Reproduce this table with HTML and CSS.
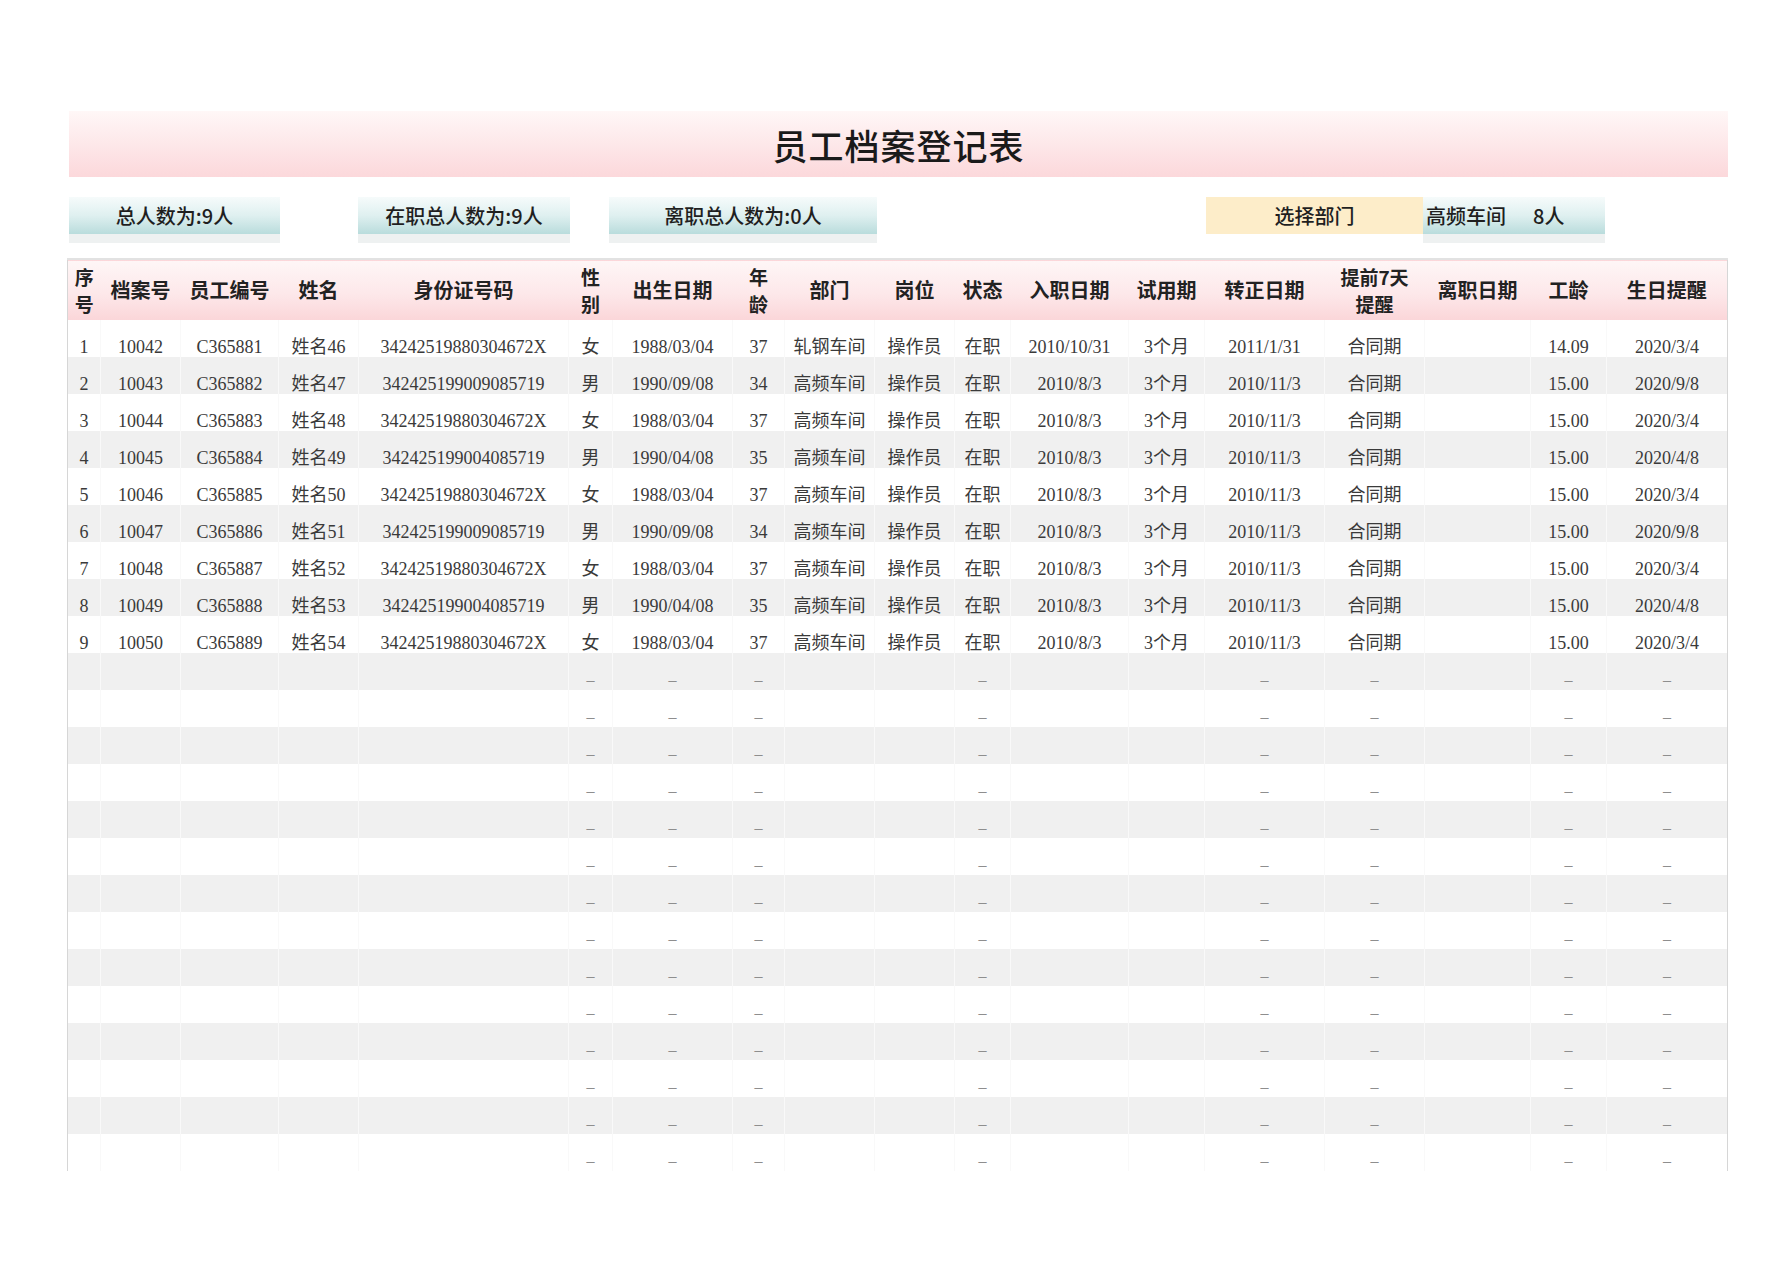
FILE: index.html
```html
<!DOCTYPE html>
<html lang="zh-CN">
<head>
<meta charset="utf-8">
<title>员工档案登记表</title>
<link rel="stylesheet" href="styles.css">
</head>
<body>
<div class="sheet">
  <div class="title-band"><h1 class="title">员工档案登记表</h1></div>

  <div class="summary">
    <div class="stat stat-1">总人数为:9人</div>
    <div class="stat stat-2">在职总人数为:9人</div>
    <div class="stat stat-3">离职总人数为:0人</div>
    <div class="pick">选择部门</div>
    <div class="stat stat-dept"><span>高频车间</span><span class="dept-count">8人</span></div>
  </div>

  <table class="grid">
    <colgroup>
      <col class="c-33"><col class="c-80"><col class="c-98"><col class="c-80"><col class="c-210">
      <col class="c-44"><col class="c-120"><col class="c-52"><col class="c-90"><col class="c-80">
      <col class="c-56"><col class="c-118"><col class="c-76"><col class="c-120"><col class="c-100">
      <col class="c-106"><col class="c-76"><col class="c-121">
    </colgroup>
    <thead>
      <tr>
        <th class="two">序<br>号</th><th>档案号</th><th>员工编号</th><th>姓名</th><th>身份证号码</th>
        <th class="two">性<br>别</th><th>出生日期</th><th class="two">年<br>龄</th><th>部门</th><th>岗位</th>
        <th>状态</th><th>入职日期</th><th>试用期</th><th>转正日期</th><th class="two">提前7天<br>提醒</th>
        <th>离职日期</th><th>工龄</th><th>生日提醒</th>
      </tr>
    </thead>
    <tbody>
      <tr><td>1</td><td>10042</td><td>C365881</td><td>姓名46</td><td>34242519880304672X</td><td>女</td><td>1988/03/04</td><td>37</td><td>轧钢车间</td><td>操作员</td><td>在职</td><td>2010/10/31</td><td>3个月</td><td>2011/1/31</td><td>合同期</td><td></td><td>14.09</td><td>2020/3/4</td></tr>
      <tr><td>2</td><td>10043</td><td>C365882</td><td>姓名47</td><td>342425199009085719</td><td>男</td><td>1990/09/08</td><td>34</td><td>高频车间</td><td>操作员</td><td>在职</td><td>2010/8/3</td><td>3个月</td><td>2010/11/3</td><td>合同期</td><td></td><td>15.00</td><td>2020/9/8</td></tr>
      <tr><td>3</td><td>10044</td><td>C365883</td><td>姓名48</td><td>34242519880304672X</td><td>女</td><td>1988/03/04</td><td>37</td><td>高频车间</td><td>操作员</td><td>在职</td><td>2010/8/3</td><td>3个月</td><td>2010/11/3</td><td>合同期</td><td></td><td>15.00</td><td>2020/3/4</td></tr>
      <tr><td>4</td><td>10045</td><td>C365884</td><td>姓名49</td><td>342425199004085719</td><td>男</td><td>1990/04/08</td><td>35</td><td>高频车间</td><td>操作员</td><td>在职</td><td>2010/8/3</td><td>3个月</td><td>2010/11/3</td><td>合同期</td><td></td><td>15.00</td><td>2020/4/8</td></tr>
      <tr><td>5</td><td>10046</td><td>C365885</td><td>姓名50</td><td>34242519880304672X</td><td>女</td><td>1988/03/04</td><td>37</td><td>高频车间</td><td>操作员</td><td>在职</td><td>2010/8/3</td><td>3个月</td><td>2010/11/3</td><td>合同期</td><td></td><td>15.00</td><td>2020/3/4</td></tr>
      <tr><td>6</td><td>10047</td><td>C365886</td><td>姓名51</td><td>342425199009085719</td><td>男</td><td>1990/09/08</td><td>34</td><td>高频车间</td><td>操作员</td><td>在职</td><td>2010/8/3</td><td>3个月</td><td>2010/11/3</td><td>合同期</td><td></td><td>15.00</td><td>2020/9/8</td></tr>
      <tr><td>7</td><td>10048</td><td>C365887</td><td>姓名52</td><td>34242519880304672X</td><td>女</td><td>1988/03/04</td><td>37</td><td>高频车间</td><td>操作员</td><td>在职</td><td>2010/8/3</td><td>3个月</td><td>2010/11/3</td><td>合同期</td><td></td><td>15.00</td><td>2020/3/4</td></tr>
      <tr><td>8</td><td>10049</td><td>C365888</td><td>姓名53</td><td>342425199004085719</td><td>男</td><td>1990/04/08</td><td>35</td><td>高频车间</td><td>操作员</td><td>在职</td><td>2010/8/3</td><td>3个月</td><td>2010/11/3</td><td>合同期</td><td></td><td>15.00</td><td>2020/4/8</td></tr>
      <tr><td>9</td><td>10050</td><td>C365889</td><td>姓名54</td><td>34242519880304672X</td><td>女</td><td>1988/03/04</td><td>37</td><td>高频车间</td><td>操作员</td><td>在职</td><td>2010/8/3</td><td>3个月</td><td>2010/11/3</td><td>合同期</td><td></td><td>15.00</td><td>2020/3/4</td></tr>
      <tr class="empty"><td></td><td></td><td></td><td></td><td></td><td>–</td><td>–</td><td>–</td><td></td><td></td><td>–</td><td></td><td></td><td>–</td><td>–</td><td></td><td>–</td><td>–</td></tr>
      <tr class="empty"><td></td><td></td><td></td><td></td><td></td><td>–</td><td>–</td><td>–</td><td></td><td></td><td>–</td><td></td><td></td><td>–</td><td>–</td><td></td><td>–</td><td>–</td></tr>
      <tr class="empty"><td></td><td></td><td></td><td></td><td></td><td>–</td><td>–</td><td>–</td><td></td><td></td><td>–</td><td></td><td></td><td>–</td><td>–</td><td></td><td>–</td><td>–</td></tr>
      <tr class="empty"><td></td><td></td><td></td><td></td><td></td><td>–</td><td>–</td><td>–</td><td></td><td></td><td>–</td><td></td><td></td><td>–</td><td>–</td><td></td><td>–</td><td>–</td></tr>
      <tr class="empty"><td></td><td></td><td></td><td></td><td></td><td>–</td><td>–</td><td>–</td><td></td><td></td><td>–</td><td></td><td></td><td>–</td><td>–</td><td></td><td>–</td><td>–</td></tr>
      <tr class="empty"><td></td><td></td><td></td><td></td><td></td><td>–</td><td>–</td><td>–</td><td></td><td></td><td>–</td><td></td><td></td><td>–</td><td>–</td><td></td><td>–</td><td>–</td></tr>
      <tr class="empty"><td></td><td></td><td></td><td></td><td></td><td>–</td><td>–</td><td>–</td><td></td><td></td><td>–</td><td></td><td></td><td>–</td><td>–</td><td></td><td>–</td><td>–</td></tr>
      <tr class="empty"><td></td><td></td><td></td><td></td><td></td><td>–</td><td>–</td><td>–</td><td></td><td></td><td>–</td><td></td><td></td><td>–</td><td>–</td><td></td><td>–</td><td>–</td></tr>
      <tr class="empty"><td></td><td></td><td></td><td></td><td></td><td>–</td><td>–</td><td>–</td><td></td><td></td><td>–</td><td></td><td></td><td>–</td><td>–</td><td></td><td>–</td><td>–</td></tr>
      <tr class="empty"><td></td><td></td><td></td><td></td><td></td><td>–</td><td>–</td><td>–</td><td></td><td></td><td>–</td><td></td><td></td><td>–</td><td>–</td><td></td><td>–</td><td>–</td></tr>
      <tr class="empty"><td></td><td></td><td></td><td></td><td></td><td>–</td><td>–</td><td>–</td><td></td><td></td><td>–</td><td></td><td></td><td>–</td><td>–</td><td></td><td>–</td><td>–</td></tr>
      <tr class="empty"><td></td><td></td><td></td><td></td><td></td><td>–</td><td>–</td><td>–</td><td></td><td></td><td>–</td><td></td><td></td><td>–</td><td>–</td><td></td><td>–</td><td>–</td></tr>
      <tr class="empty"><td></td><td></td><td></td><td></td><td></td><td>–</td><td>–</td><td>–</td><td></td><td></td><td>–</td><td></td><td></td><td>–</td><td>–</td><td></td><td>–</td><td>–</td></tr>
      <tr class="empty"><td></td><td></td><td></td><td></td><td></td><td>–</td><td>–</td><td>–</td><td></td><td></td><td>–</td><td></td><td></td><td>–</td><td>–</td><td></td><td>–</td><td>–</td></tr>
    </tbody>
  </table>
</div>
</body>
</html>
```

FILE: styles.css
```css
html, body {
  margin: 0;
  padding: 0;
  background: #ffffff;
}

body {
  font-family: "Liberation Serif", "Noto Sans CJK SC", serif;
  color: #333333;
}

.sheet {
  width: 1661px;
  margin-left: 67px;
  padding-top: 111px;
}

/* Title band */
.title-band {
  margin-left: 2px;
  height: 66px;
  display: flex;
  align-items: center;
  justify-content: center;
  background: linear-gradient(to bottom, #fff7f7 0%, #fde6e8 55%, #fcd8db 100%);
}

.title {
  margin: 0;
  font-family: "Noto Sans CJK SC", sans-serif;
  font-size: 35px;
  font-weight: 500;
  color: #1a1a1a;
  letter-spacing: 1px;
  line-height: 1;
}

/* Summary strip */
.summary {
  margin-top: 20px;
  height: 37px;
  display: flex;
  align-items: stretch;
  font-family: "Noto Sans CJK SC", sans-serif;
  font-size: 20px;
  font-weight: 500;
  color: #1f1f1f;
}

.stat {
  display: flex;
  align-items: center;
  justify-content: center;
  background: linear-gradient(to bottom, #f6fbfb 0%, #dff0f0 50%, #b9dcdc 100%);
  box-shadow: 0 9px 0 0 #eef1f1;
}

.stat-1 { margin-left: 2px; width: 211px; }
.stat-2 { margin-left: 78px; width: 212px; }
.stat-3 { margin-left: 39px; width: 268px; }

.pick {
  margin-left: 329px;
  width: 217px;
  display: flex;
  align-items: center;
  justify-content: center;
  background: #fdedc9;
}

.stat-dept {
  width: 182px;
  justify-content: flex-start;
  padding-left: 3px;
  box-sizing: border-box;
}

.dept-count {
  margin-left: 27px;
}

/* Table */
.grid {
  margin-top: 24px;
  width: 1661px;
  border-collapse: collapse;
  table-layout: fixed;
  border-left: 1px solid #d6d6d6;
  border-right: 1px solid #d6d6d6;
}

.c-33 { width: 33px; }
.c-44 { width: 44px; }
.c-52 { width: 52px; }
.c-56 { width: 56px; }
.c-76 { width: 76px; }
.c-80 { width: 80px; }
.c-90 { width: 90px; }
.c-98 { width: 98px; }
.c-100 { width: 100px; }
.c-106 { width: 106px; }
.c-118 { width: 118px; }
.c-120 { width: 120px; }
.c-121 { width: 121px; }
.c-210 { width: 210px; }

.grid thead tr {
  background: linear-gradient(to bottom, #fef6f6 0%, #fde8ea 55%, #fbd6d9 100%);
  border-top: 2px solid #e2e2e2;
}

.grid th {
  height: 60px;
  padding: 0;
  font-family: "Noto Sans CJK SC", sans-serif;
  font-size: 20px;
  font-weight: 700;
  color: #222222;
  text-align: center;
  vertical-align: middle;
  line-height: 24px;
  white-space: nowrap;
}

.grid th.two {
  font-size: 19px;
  line-height: 27px;
}

.grid td {
  height: 37px;
  padding: 0 0 1px 0;
  box-sizing: border-box;
  font-size: 18px;
  line-height: 18px;
  color: #3a3a3a;
  text-align: center;
  vertical-align: bottom;
  white-space: nowrap;
  overflow: hidden;
  border-left: 1px solid rgba(0, 0, 0, 0.025);
}

.grid td:first-child {
  border-left: none;
}

.grid tbody tr:nth-child(even) {
  background: #f0f0f0;
}

.grid tbody tr.empty td {
  color: #8e8e8e;
  font-size: 16px;
}
```
